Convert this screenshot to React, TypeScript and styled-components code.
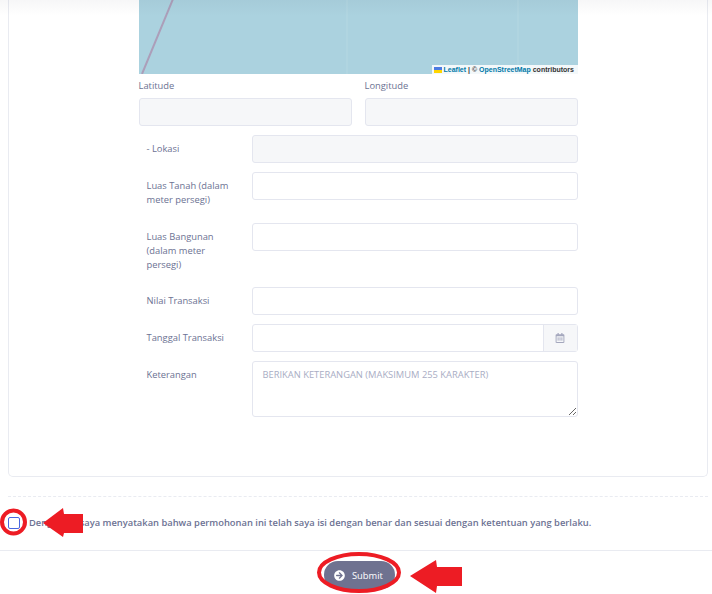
import styled, { createGlobalStyle } from "styled-components";
import { FaArrowCircleRight, FaRegCalendarAlt } from "react-icons/fa";

const GlobalStyle = createGlobalStyle`
  html, body {
    margin: 0;
    padding: 0;
    background: #ffffff;
  }
  body {
    font-family: "Open Sans", "Noto Sans", sans-serif;
    font-size: 9.35px;
    color: #6c7293;
  }
`;

const Page = styled.div`
  position: relative;
  width: 712px;
  height: 594px;
  overflow: hidden;
`;

const TopShade = styled.div`
  position: absolute;
  top: 0;
  left: 0;
  right: 0;
  height: 16px;
  background: linear-gradient(rgba(20, 20, 50, 0.035), rgba(20, 20, 50, 0));
  pointer-events: none;
`;

const Card = styled.div`
  box-sizing: border-box;
  height: 477px;
  margin: 0 4px 0 8px;
  border: 1px solid #e9ebf1;
  border-top: 0;
  border-radius: 0 0 5px 5px;
  display: flex;
  justify-content: center;
`;

const FormColumn = styled.div`
  width: 439px;
  display: flex;
  flex-direction: column;
`;

const MapBox = styled.div`
  position: relative;
  height: 74px;
  background: #abd2df;
  overflow: hidden;
`;

const MapDrawing = styled.svg`
  display: block;
  width: 100%;
  height: 100%;
`;

const Attribution = styled.div`
  position: absolute;
  right: 0;
  bottom: 0;
  height: 9px;
  width: 146px;
  display: flex;
  align-items: center;
  gap: 2px;
  padding-left: 2px;
  box-sizing: border-box;
  background: rgba(255, 255, 255, 0.85);
  font-family: "Liberation Sans", sans-serif;
  font-size: 7px;
  font-weight: 700;
  line-height: 9px;
  color: #333333;
  white-space: nowrap;
`;

const AttributionLink = styled.span`
  color: #0078a8;
`;

const Flag = styled.svg`
  width: 8px;
  height: 6px;
  flex: none;
`;

const CoordRow = styled.div`
  display: grid;
  grid-template-columns: 213px 213px;
  column-gap: 13px;
  margin-top: 5px;
  margin-bottom: 9px;
`;

const CoordField = styled.div`
  display: flex;
  flex-direction: column;
`;

const CoordLabel = styled.label`
  display: block;
  height: 19px;
  line-height: 14px;
  color: #6c7293;
`;

const TextInput = styled.div<{ $disabled?: boolean }>`
  box-sizing: border-box;
  height: 28px;
  width: 100%;
  border: 1px solid #e4e6ef;
  border-radius: 3px;
  background: ${(p) => (p.$disabled ? "#f6f7f9" : "#ffffff")};
`;

const FieldRow = styled.div`
  display: grid;
  grid-template-columns: 113px 326px;
  margin-bottom: 9px;
`;

const RowLabel = styled.label`
  padding: 7px 15px 6.6px 8px;
  line-height: 14px;
  color: #6c7293;
`;

const InputGroup = styled.div`
  display: flex;
  height: 28px;
  box-sizing: border-box;
  border: 1px solid #e4e6ef;
  border-radius: 3px;
`;

const GroupFill = styled.div`
  flex: 1;
`;

const GroupAddon = styled.div`
  width: 33px;
  display: flex;
  align-items: center;
  justify-content: center;
  background: #f6f7f9;
  border-left: 1px solid #e4e6ef;
  color: #a4a7bd;
  font-size: 10px;
`;

const TextArea = styled.textarea`
  box-sizing: border-box;
  display: block;
  width: 326px;
  height: 56px;
  margin: 0;
  padding: 6px 10px;
  border: 1px solid #e4e6ef;
  border-radius: 3px;
  font-family: inherit;
  font-size: 9.35px;
  line-height: 14px;
  outline: none;

  &::placeholder {
    color: #a9adc4;
    opacity: 1;
  }
`;

const Confirm = styled.div`
  margin: 19px 4px 0 8px;
  border-top: 1px dashed #e9ebf1;
  height: 51px;
  padding-bottom: 2px;
  display: flex;
  align-items: center;
  gap: 9px;
`;

const CheckBox = styled.span`
  box-sizing: border-box;
  width: 12px;
  height: 12px;
  flex: none;
  border: 1px solid #4a66e0;
  border-radius: 2px;
  background: #ffffff;
`;

const ConfirmText = styled.span`
  font-weight: 600;
  color: #6c7293;
  white-space: nowrap;
`;

const Footer = styled.div`
  border-top: 1px solid #e9ebf1;
  display: flex;
  justify-content: center;
  padding: 10px 0 0 7px;
`;

const SubmitButton = styled.button`
  display: flex;
  align-items: center;
  gap: 7px;
  box-sizing: border-box;
  width: 71px;
  height: 28px;
  padding: 0 0 0 10px;
  border: 0;
  border-radius: 14px;
  background: #6f7290;
  color: #ffffff;
  font-family: inherit;
  font-size: 9.35px;
  font-weight: 500;
`;

const Annotations = styled.svg`
  position: absolute;
  inset: 0;
  pointer-events: none;
`;

const rows = [
  { label: "- Lokasi", disabled: true },
  { label: "Luas Tanah (dalam meter persegi)" },
  { label: "Luas Bangunan (dalam meter persegi)" },
  { label: "Nilai Transaksi" },
];

export default function App() {
  return (
    <Page>
      <GlobalStyle />
      <Card>
        <FormColumn>
          <MapBox>
            <MapDrawing viewBox="0 0 439 74">
              <line x1="208" y1="0" x2="208" y2="74" stroke="#b5d8e2" strokeWidth="1" />
              <line x1="379" y1="0" x2="379" y2="74" stroke="#b5d8e2" strokeWidth="1" />
              <line x1="34" y1="-1" x2="3" y2="74" stroke="#ac9eb9" strokeWidth="2" />
            </MapDrawing>
            <Attribution>
              <Flag viewBox="0 0 8 6">
                <rect width="8" height="3" fill="#4c7be1" />
                <rect y="3" width="8" height="3" fill="#ffd500" />
              </Flag>
              <span>
                <AttributionLink>Leaflet</AttributionLink> | ©{" "}
                <AttributionLink>OpenStreetMap</AttributionLink> contributors
              </span>
            </Attribution>
          </MapBox>

          <CoordRow>
            <CoordField>
              <CoordLabel>Latitude</CoordLabel>
              <TextInput $disabled />
            </CoordField>
            <CoordField>
              <CoordLabel>Longitude</CoordLabel>
              <TextInput $disabled />
            </CoordField>
          </CoordRow>

          {rows.map((row) => (
            <FieldRow key={row.label}>
              <RowLabel>{row.label}</RowLabel>
              <TextInput $disabled={row.disabled} />
            </FieldRow>
          ))}

          <FieldRow>
            <RowLabel>Tanggal Transaksi</RowLabel>
            <InputGroup>
              <GroupFill />
              <GroupAddon>
                <FaRegCalendarAlt />
              </GroupAddon>
            </InputGroup>
          </FieldRow>

          <FieldRow>
            <RowLabel>Keterangan</RowLabel>
            <TextArea placeholder="BERIKAN KETERANGAN (MAKSIMUM 255 KARAKTER)" />
          </FieldRow>
        </FormColumn>
      </Card>

      <Confirm>
        <CheckBox />
        <ConfirmText>
          Dengan ini saya menyatakan bahwa permohonan ini telah saya isi dengan benar dan sesuai
          dengan ketentuan yang berlaku.
        </ConfirmText>
      </Confirm>

      <Footer>
        <SubmitButton>
          <FaArrowCircleRight size={11} />
          Submit
        </SubmitButton>
      </Footer>

      <TopShade />

      <Annotations width="712" height="594" viewBox="0 0 712 594">
        <ellipse cx="13.5" cy="522" rx="11.5" ry="11.5" fill="none" stroke="#ed1c24" strokeWidth="4" />
        <ellipse cx="359" cy="572.5" rx="40" ry="18.5" fill="none" stroke="#ed1c24" strokeWidth="4" />
        <polygon points="43,523 63,508 64,514 83,514 83,533 64,533 63,537" fill="#ed1c24" />
        <polygon points="410,576 436,560 437,567 462,567 462,586 437,586 436,593" fill="#ed1c24" />
      </Annotations>
    </Page>
  );
}
